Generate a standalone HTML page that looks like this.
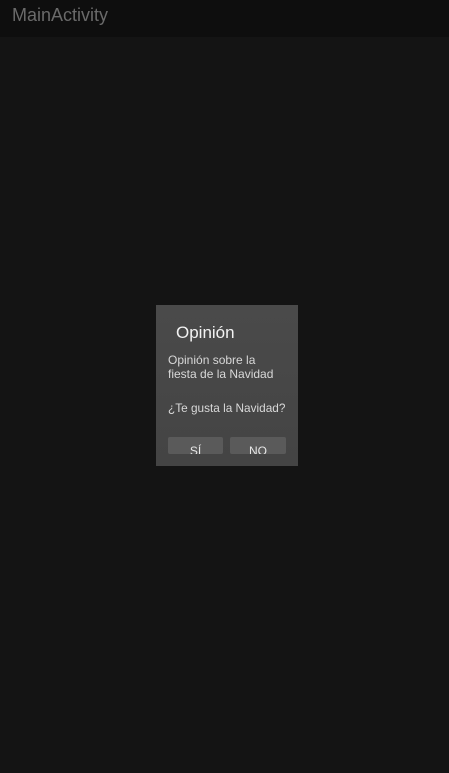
<!DOCTYPE html>
<html><head><meta charset="utf-8"><style>
html,body{margin:0;padding:0;width:449px;height:773px;background:#141414;overflow:hidden;font-family:"Liberation Sans",sans-serif;}
.bar{position:absolute;left:0;top:0;width:449px;height:37px;background:#0e0e0e;}
.bar span{position:absolute;left:12px;top:5px;font-size:18px;color:#6a6a6a;}
.dlg{position:absolute;left:156px;top:305px;width:142px;height:161px;background:linear-gradient(#4a4a4a,#444);}
.t{position:absolute;left:20px;top:18px;font-size:17px;color:#f2f2f2;}
.m{position:absolute;left:12px;top:48px;font-size:12px;line-height:14px;color:#d8d8d8;}
.q{position:absolute;left:12px;top:96px;font-size:11.8px;color:#d8d8d8;}
.b{position:absolute;top:132px;height:17px;width:56px;background:#5a5a5a;border-radius:2px;overflow:hidden;color:#e8e8e8;font-size:12px;text-align:center;}
.b span{position:absolute;left:0;right:0;top:7px;}
</style></head><body>
<div class="bar"><span>MainActivity</span></div>
<div class="dlg">
<div class="t">Opinión</div>
<div class="m">Opinión sobre la<br>fiesta de la Navidad</div>
<div class="q">¿Te gusta la Navidad?</div>
<div class="b" style="left:12px;width:55px"><span>SÍ</span></div>
<div class="b" style="left:74px"><span>NO</span></div>
</div>
</body></html>
